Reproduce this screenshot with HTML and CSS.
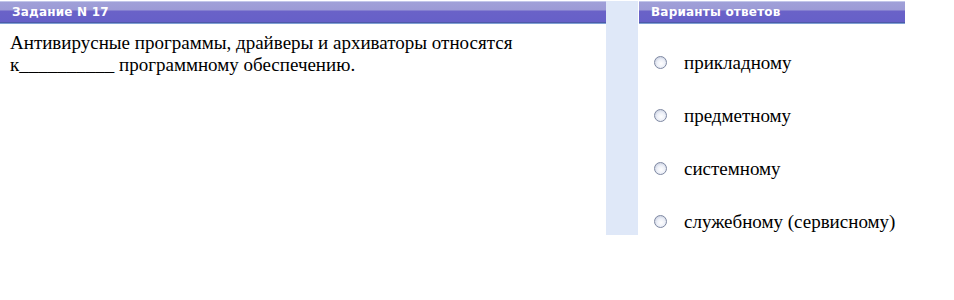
FILE: index.html
```html
<!DOCTYPE html>
<html lang="ru">
<head>
  <meta charset="UTF-8" />
  <title>Задание N 17</title>
  <link rel="stylesheet" href="styles.css">
</head>
<body>
  <div class="page">
    <div class="task">
      <div class="bar">Задание N 17</div>
      <p class="question">Антивирусные программы, драйверы и архиваторы относятся<br>к__________ программному обеспечению.</p>
    </div>
    <div class="strip"></div>
    <div class="answers">
      <div class="bar">Варианты ответов</div>
      <ul class="options">
        <li><span class="radio"></span>прикладному</li>
        <li><span class="radio"></span>предметному</li>
        <li><span class="radio"></span>системному</li>
        <li><span class="radio"></span>служебному (сервисному)</li>
      </ul>
    </div>
  </div>
</body>
</html>
```

FILE: styles.css
```css
body {
  margin: 0;
  background: #fff;
  font-family: "Liberation Serif", "Times New Roman", serif;
  color: #000;
}
.page {
  display: flex;
  align-items: flex-start;
  padding-top: 1px;
}
.task {
  width: 606px;
}
.answers {
  width: 266px;
  margin-left: 1px;
}
.bar {
  height: 23px;
  box-sizing: border-box;
  padding: 4px 0 0 12px;
  color: #fff;
  font-family: "DejaVu Sans", Verdana, sans-serif;
  font-weight: bold;
  font-size: 12px;
  letter-spacing: 0.2px;
  background: linear-gradient(#c2c6ea 0, #c2c6ea 1px, #a0a0d8 1px, #9c9ad6 9px, #6a62c8 10px, #6660c8 21px, #4e5aa8 21px, #4e5aa8 22px, #7ea0d4 22px);
}
.strip {
  width: 32px;
  height: 234px;
  background: #dfe8f8;
}
.question {
  margin: 8px 0 0 10px;
  font-size: 19px;
  line-height: 22px;
}
.options {
  list-style: none;
  margin: 0;
  padding: 32px 0 0 15px;
}
.options li {
  display: flex;
  align-items: center;
  height: 53px;
  font-size: 19px;
  margin-top: -20px;
  margin-bottom: 20px;
}
.radio {
  width: 11px;
  height: 11px;
  border: 1px solid #7e88a2;
  border-radius: 50%;
  margin-right: 17px;
  background: radial-gradient(circle at 55% 60%, #fff 0, #eceff7 45%, #b8c0d4 100%);
}
```
